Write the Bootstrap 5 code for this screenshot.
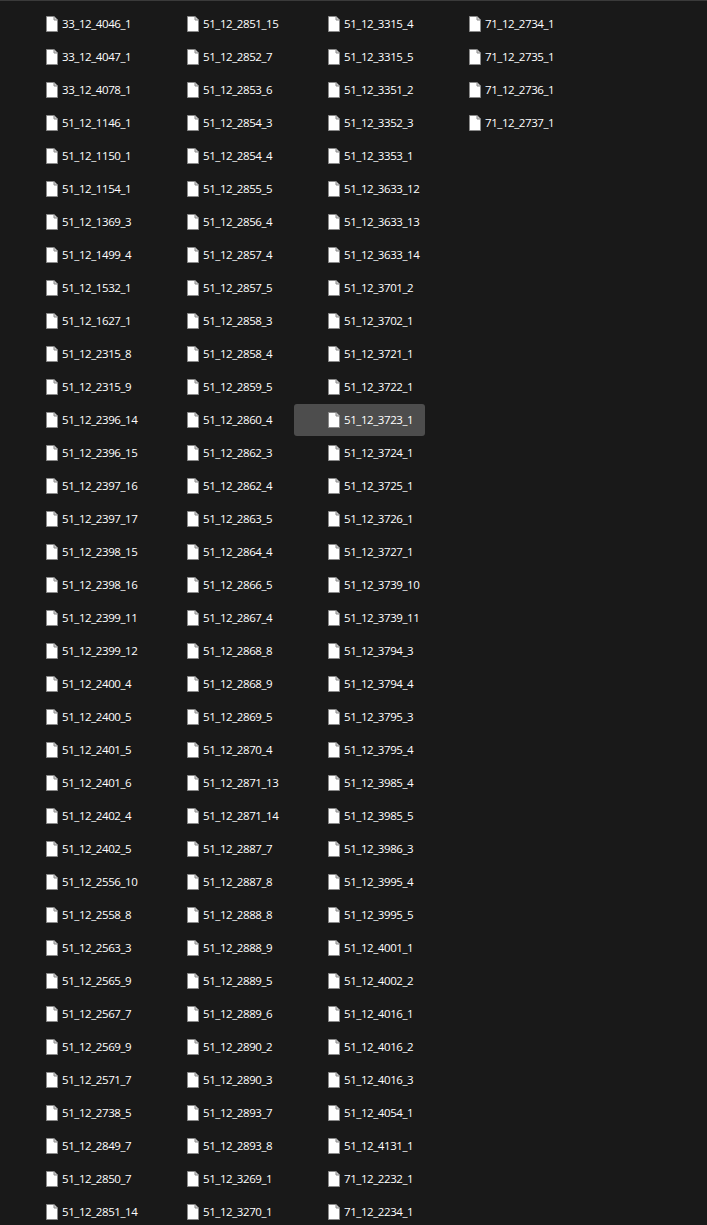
<!doctype html>
<html lang="en"><head><meta charset="utf-8"><title>Files</title>
<link href="https://cdn.jsdelivr.net/npm/bootstrap@5.3.0/dist/css/bootstrap.min.css" rel="stylesheet">
<style>
html,body{height:1225px;overflow:hidden;background:#191919}
.explorer{border-top:1px solid #3a3a3a;padding:7px 0 0 12px;gap:10px;height:1225px;overflow:hidden}
.fcol{width:131px;gap:1px}
.fitem{height:32px;flex:none;padding-left:34px;gap:4px;color:#fff;font:11.5px "Open Sans",sans-serif;border-radius:3px;white-space:nowrap;letter-spacing:-.42px}
.fitem span{padding-bottom:2px}
.fitem.sel{background:#4d4d4d}
.fitem svg{flex:none;width:12px;height:16px}
</style></head><body>
<svg width="0" height="0" class="d-block position-absolute"><symbol id="doc" viewBox="0 0 12 16"><path d="M.5.5H8L11.5 4V15.5H.5Z" fill="#fff" stroke="#8a8a8a"/><path d="M8 .5V4H11.5" fill="#d0d0d0" stroke="#8a8a8a"/></symbol></svg>
<main class="explorer d-flex align-items-start">
<div class="fcol d-flex flex-column">
<div class="fitem d-flex align-items-center"><svg><use href="#doc"/></svg><span>33_12_4046_1</span></div>
<div class="fitem d-flex align-items-center"><svg><use href="#doc"/></svg><span>33_12_4047_1</span></div>
<div class="fitem d-flex align-items-center"><svg><use href="#doc"/></svg><span>33_12_4078_1</span></div>
<div class="fitem d-flex align-items-center"><svg><use href="#doc"/></svg><span>51_12_1146_1</span></div>
<div class="fitem d-flex align-items-center"><svg><use href="#doc"/></svg><span>51_12_1150_1</span></div>
<div class="fitem d-flex align-items-center"><svg><use href="#doc"/></svg><span>51_12_1154_1</span></div>
<div class="fitem d-flex align-items-center"><svg><use href="#doc"/></svg><span>51_12_1369_3</span></div>
<div class="fitem d-flex align-items-center"><svg><use href="#doc"/></svg><span>51_12_1499_4</span></div>
<div class="fitem d-flex align-items-center"><svg><use href="#doc"/></svg><span>51_12_1532_1</span></div>
<div class="fitem d-flex align-items-center"><svg><use href="#doc"/></svg><span>51_12_1627_1</span></div>
<div class="fitem d-flex align-items-center"><svg><use href="#doc"/></svg><span>51_12_2315_8</span></div>
<div class="fitem d-flex align-items-center"><svg><use href="#doc"/></svg><span>51_12_2315_9</span></div>
<div class="fitem d-flex align-items-center"><svg><use href="#doc"/></svg><span>51_12_2396_14</span></div>
<div class="fitem d-flex align-items-center"><svg><use href="#doc"/></svg><span>51_12_2396_15</span></div>
<div class="fitem d-flex align-items-center"><svg><use href="#doc"/></svg><span>51_12_2397_16</span></div>
<div class="fitem d-flex align-items-center"><svg><use href="#doc"/></svg><span>51_12_2397_17</span></div>
<div class="fitem d-flex align-items-center"><svg><use href="#doc"/></svg><span>51_12_2398_15</span></div>
<div class="fitem d-flex align-items-center"><svg><use href="#doc"/></svg><span>51_12_2398_16</span></div>
<div class="fitem d-flex align-items-center"><svg><use href="#doc"/></svg><span>51_12_2399_11</span></div>
<div class="fitem d-flex align-items-center"><svg><use href="#doc"/></svg><span>51_12_2399_12</span></div>
<div class="fitem d-flex align-items-center"><svg><use href="#doc"/></svg><span>51_12_2400_4</span></div>
<div class="fitem d-flex align-items-center"><svg><use href="#doc"/></svg><span>51_12_2400_5</span></div>
<div class="fitem d-flex align-items-center"><svg><use href="#doc"/></svg><span>51_12_2401_5</span></div>
<div class="fitem d-flex align-items-center"><svg><use href="#doc"/></svg><span>51_12_2401_6</span></div>
<div class="fitem d-flex align-items-center"><svg><use href="#doc"/></svg><span>51_12_2402_4</span></div>
<div class="fitem d-flex align-items-center"><svg><use href="#doc"/></svg><span>51_12_2402_5</span></div>
<div class="fitem d-flex align-items-center"><svg><use href="#doc"/></svg><span>51_12_2556_10</span></div>
<div class="fitem d-flex align-items-center"><svg><use href="#doc"/></svg><span>51_12_2558_8</span></div>
<div class="fitem d-flex align-items-center"><svg><use href="#doc"/></svg><span>51_12_2563_3</span></div>
<div class="fitem d-flex align-items-center"><svg><use href="#doc"/></svg><span>51_12_2565_9</span></div>
<div class="fitem d-flex align-items-center"><svg><use href="#doc"/></svg><span>51_12_2567_7</span></div>
<div class="fitem d-flex align-items-center"><svg><use href="#doc"/></svg><span>51_12_2569_9</span></div>
<div class="fitem d-flex align-items-center"><svg><use href="#doc"/></svg><span>51_12_2571_7</span></div>
<div class="fitem d-flex align-items-center"><svg><use href="#doc"/></svg><span>51_12_2738_5</span></div>
<div class="fitem d-flex align-items-center"><svg><use href="#doc"/></svg><span>51_12_2849_7</span></div>
<div class="fitem d-flex align-items-center"><svg><use href="#doc"/></svg><span>51_12_2850_7</span></div>
<div class="fitem d-flex align-items-center"><svg><use href="#doc"/></svg><span>51_12_2851_14</span></div>
</div>
<div class="fcol d-flex flex-column">
<div class="fitem d-flex align-items-center"><svg><use href="#doc"/></svg><span>51_12_2851_15</span></div>
<div class="fitem d-flex align-items-center"><svg><use href="#doc"/></svg><span>51_12_2852_7</span></div>
<div class="fitem d-flex align-items-center"><svg><use href="#doc"/></svg><span>51_12_2853_6</span></div>
<div class="fitem d-flex align-items-center"><svg><use href="#doc"/></svg><span>51_12_2854_3</span></div>
<div class="fitem d-flex align-items-center"><svg><use href="#doc"/></svg><span>51_12_2854_4</span></div>
<div class="fitem d-flex align-items-center"><svg><use href="#doc"/></svg><span>51_12_2855_5</span></div>
<div class="fitem d-flex align-items-center"><svg><use href="#doc"/></svg><span>51_12_2856_4</span></div>
<div class="fitem d-flex align-items-center"><svg><use href="#doc"/></svg><span>51_12_2857_4</span></div>
<div class="fitem d-flex align-items-center"><svg><use href="#doc"/></svg><span>51_12_2857_5</span></div>
<div class="fitem d-flex align-items-center"><svg><use href="#doc"/></svg><span>51_12_2858_3</span></div>
<div class="fitem d-flex align-items-center"><svg><use href="#doc"/></svg><span>51_12_2858_4</span></div>
<div class="fitem d-flex align-items-center"><svg><use href="#doc"/></svg><span>51_12_2859_5</span></div>
<div class="fitem d-flex align-items-center"><svg><use href="#doc"/></svg><span>51_12_2860_4</span></div>
<div class="fitem d-flex align-items-center"><svg><use href="#doc"/></svg><span>51_12_2862_3</span></div>
<div class="fitem d-flex align-items-center"><svg><use href="#doc"/></svg><span>51_12_2862_4</span></div>
<div class="fitem d-flex align-items-center"><svg><use href="#doc"/></svg><span>51_12_2863_5</span></div>
<div class="fitem d-flex align-items-center"><svg><use href="#doc"/></svg><span>51_12_2864_4</span></div>
<div class="fitem d-flex align-items-center"><svg><use href="#doc"/></svg><span>51_12_2866_5</span></div>
<div class="fitem d-flex align-items-center"><svg><use href="#doc"/></svg><span>51_12_2867_4</span></div>
<div class="fitem d-flex align-items-center"><svg><use href="#doc"/></svg><span>51_12_2868_8</span></div>
<div class="fitem d-flex align-items-center"><svg><use href="#doc"/></svg><span>51_12_2868_9</span></div>
<div class="fitem d-flex align-items-center"><svg><use href="#doc"/></svg><span>51_12_2869_5</span></div>
<div class="fitem d-flex align-items-center"><svg><use href="#doc"/></svg><span>51_12_2870_4</span></div>
<div class="fitem d-flex align-items-center"><svg><use href="#doc"/></svg><span>51_12_2871_13</span></div>
<div class="fitem d-flex align-items-center"><svg><use href="#doc"/></svg><span>51_12_2871_14</span></div>
<div class="fitem d-flex align-items-center"><svg><use href="#doc"/></svg><span>51_12_2887_7</span></div>
<div class="fitem d-flex align-items-center"><svg><use href="#doc"/></svg><span>51_12_2887_8</span></div>
<div class="fitem d-flex align-items-center"><svg><use href="#doc"/></svg><span>51_12_2888_8</span></div>
<div class="fitem d-flex align-items-center"><svg><use href="#doc"/></svg><span>51_12_2888_9</span></div>
<div class="fitem d-flex align-items-center"><svg><use href="#doc"/></svg><span>51_12_2889_5</span></div>
<div class="fitem d-flex align-items-center"><svg><use href="#doc"/></svg><span>51_12_2889_6</span></div>
<div class="fitem d-flex align-items-center"><svg><use href="#doc"/></svg><span>51_12_2890_2</span></div>
<div class="fitem d-flex align-items-center"><svg><use href="#doc"/></svg><span>51_12_2890_3</span></div>
<div class="fitem d-flex align-items-center"><svg><use href="#doc"/></svg><span>51_12_2893_7</span></div>
<div class="fitem d-flex align-items-center"><svg><use href="#doc"/></svg><span>51_12_2893_8</span></div>
<div class="fitem d-flex align-items-center"><svg><use href="#doc"/></svg><span>51_12_3269_1</span></div>
<div class="fitem d-flex align-items-center"><svg><use href="#doc"/></svg><span>51_12_3270_1</span></div>
</div>
<div class="fcol d-flex flex-column">
<div class="fitem d-flex align-items-center"><svg><use href="#doc"/></svg><span>51_12_3315_4</span></div>
<div class="fitem d-flex align-items-center"><svg><use href="#doc"/></svg><span>51_12_3315_5</span></div>
<div class="fitem d-flex align-items-center"><svg><use href="#doc"/></svg><span>51_12_3351_2</span></div>
<div class="fitem d-flex align-items-center"><svg><use href="#doc"/></svg><span>51_12_3352_3</span></div>
<div class="fitem d-flex align-items-center"><svg><use href="#doc"/></svg><span>51_12_3353_1</span></div>
<div class="fitem d-flex align-items-center"><svg><use href="#doc"/></svg><span>51_12_3633_12</span></div>
<div class="fitem d-flex align-items-center"><svg><use href="#doc"/></svg><span>51_12_3633_13</span></div>
<div class="fitem d-flex align-items-center"><svg><use href="#doc"/></svg><span>51_12_3633_14</span></div>
<div class="fitem d-flex align-items-center"><svg><use href="#doc"/></svg><span>51_12_3701_2</span></div>
<div class="fitem d-flex align-items-center"><svg><use href="#doc"/></svg><span>51_12_3702_1</span></div>
<div class="fitem d-flex align-items-center"><svg><use href="#doc"/></svg><span>51_12_3721_1</span></div>
<div class="fitem d-flex align-items-center"><svg><use href="#doc"/></svg><span>51_12_3722_1</span></div>
<div class="fitem sel d-flex align-items-center"><svg><use href="#doc"/></svg><span>51_12_3723_1</span></div>
<div class="fitem d-flex align-items-center"><svg><use href="#doc"/></svg><span>51_12_3724_1</span></div>
<div class="fitem d-flex align-items-center"><svg><use href="#doc"/></svg><span>51_12_3725_1</span></div>
<div class="fitem d-flex align-items-center"><svg><use href="#doc"/></svg><span>51_12_3726_1</span></div>
<div class="fitem d-flex align-items-center"><svg><use href="#doc"/></svg><span>51_12_3727_1</span></div>
<div class="fitem d-flex align-items-center"><svg><use href="#doc"/></svg><span>51_12_3739_10</span></div>
<div class="fitem d-flex align-items-center"><svg><use href="#doc"/></svg><span>51_12_3739_11</span></div>
<div class="fitem d-flex align-items-center"><svg><use href="#doc"/></svg><span>51_12_3794_3</span></div>
<div class="fitem d-flex align-items-center"><svg><use href="#doc"/></svg><span>51_12_3794_4</span></div>
<div class="fitem d-flex align-items-center"><svg><use href="#doc"/></svg><span>51_12_3795_3</span></div>
<div class="fitem d-flex align-items-center"><svg><use href="#doc"/></svg><span>51_12_3795_4</span></div>
<div class="fitem d-flex align-items-center"><svg><use href="#doc"/></svg><span>51_12_3985_4</span></div>
<div class="fitem d-flex align-items-center"><svg><use href="#doc"/></svg><span>51_12_3985_5</span></div>
<div class="fitem d-flex align-items-center"><svg><use href="#doc"/></svg><span>51_12_3986_3</span></div>
<div class="fitem d-flex align-items-center"><svg><use href="#doc"/></svg><span>51_12_3995_4</span></div>
<div class="fitem d-flex align-items-center"><svg><use href="#doc"/></svg><span>51_12_3995_5</span></div>
<div class="fitem d-flex align-items-center"><svg><use href="#doc"/></svg><span>51_12_4001_1</span></div>
<div class="fitem d-flex align-items-center"><svg><use href="#doc"/></svg><span>51_12_4002_2</span></div>
<div class="fitem d-flex align-items-center"><svg><use href="#doc"/></svg><span>51_12_4016_1</span></div>
<div class="fitem d-flex align-items-center"><svg><use href="#doc"/></svg><span>51_12_4016_2</span></div>
<div class="fitem d-flex align-items-center"><svg><use href="#doc"/></svg><span>51_12_4016_3</span></div>
<div class="fitem d-flex align-items-center"><svg><use href="#doc"/></svg><span>51_12_4054_1</span></div>
<div class="fitem d-flex align-items-center"><svg><use href="#doc"/></svg><span>51_12_4131_1</span></div>
<div class="fitem d-flex align-items-center"><svg><use href="#doc"/></svg><span>71_12_2232_1</span></div>
<div class="fitem d-flex align-items-center"><svg><use href="#doc"/></svg><span>71_12_2234_1</span></div>
</div>
<div class="fcol d-flex flex-column">
<div class="fitem d-flex align-items-center"><svg><use href="#doc"/></svg><span>71_12_2734_1</span></div>
<div class="fitem d-flex align-items-center"><svg><use href="#doc"/></svg><span>71_12_2735_1</span></div>
<div class="fitem d-flex align-items-center"><svg><use href="#doc"/></svg><span>71_12_2736_1</span></div>
<div class="fitem d-flex align-items-center"><svg><use href="#doc"/></svg><span>71_12_2737_1</span></div>
</div>
</main>
<script src="https://cdn.jsdelivr.net/npm/bootstrap@5.3.0/dist/js/bootstrap.bundle.min.js"></script>
</body></html>
